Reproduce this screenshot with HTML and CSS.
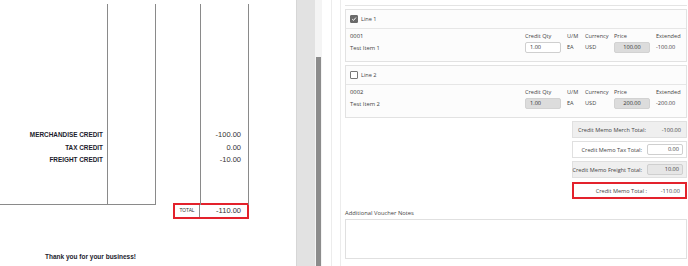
FILE: index.html
```html
<!DOCTYPE html>
<html lang="en">

<head>
     <meta charset="UTF-8">
     <meta name="viewport" content="width=device-width, initial-scale=1.0">
     <title>Credit memo | Review</title>
     <link rel="stylesheet" href="styles.css">
</head>

<body>

     <div id="wrapper">
          <!-- Printed credit memo preview -->
          <div class="doc">
               <div class="doc-table">
                    <div class="col col-desc">
                         <div class="label">MERCHANDISE CREDIT</div>
                         <div class="label">TAX CREDIT</div>
                         <div class="label">FREIGHT CREDIT</div>
                    </div>
                    <div class="col col-two"></div>
                    <div class="col col-three"></div>
                    <div class="col col-amount">
                         <div class="amount">-100.00</div>
                         <div class="amount">0.00</div>
                         <div class="amount">-10.00</div>
                    </div>
               </div>
               <div class="total-row">
                    <div class="total-label">TOTAL</div>
                    <div class="total-value">-110.00</div>
               </div>
               <p class="thanks">Thank you for your business!</p>
          </div>

          <div class="gutter"></div>
          <div class="scroll-track">
               <div class="scroll-thumb"></div>
          </div>

          <!-- Credit memo editor -->
          <div class="editor">
               <div class="frame-outer">
                    <div class="frame-inner">
                         <div class="prev-edge"></div>

                         <div class="line-card">
                              <div class="line-head">
                                   <span class="check checked">
                                        <svg viewBox="0 0 10 10" width="8" height="8">
                                             <path d="M2 5.2 L4.2 7.3 L8.2 2.6" fill="none" stroke="#fff" stroke-width="1.6" />
                                        </svg>
                                   </span>
                                   <span>Line 1</span>
                              </div>
                              <div class="line-body">
                                   <div class="item">
                                        <div class="item-code">0001</div>
                                        <div class="item-name">Test Item 1</div>
                                   </div>
                                   <div class="fields">
                                        <div class="field f-qty">
                                             <div class="f-label">Credit Qty</div>
                                             <div class="box">1.00</div>
                                        </div>
                                        <div class="field f-um">
                                             <div class="f-label">U/M</div>
                                             <div class="f-text">EA</div>
                                        </div>
                                        <div class="field f-cur">
                                             <div class="f-label">Currency</div>
                                             <div class="f-text">USD</div>
                                        </div>
                                        <div class="field f-price">
                                             <div class="f-label">Price</div>
                                             <div class="box box-off center">100.00</div>
                                        </div>
                                        <div class="field f-ext">
                                             <div class="f-label">Extended</div>
                                             <div class="f-text">-100.00</div>
                                        </div>
                                   </div>
                              </div>
                         </div>

                         <div class="line-card">
                              <div class="line-head">
                                   <span class="check"></span>
                                   <span>Line 2</span>
                              </div>
                              <div class="line-body">
                                   <div class="item">
                                        <div class="item-code">0002</div>
                                        <div class="item-name">Test Item 2</div>
                                   </div>
                                   <div class="fields">
                                        <div class="field f-qty">
                                             <div class="f-label">Credit Qty</div>
                                             <div class="box box-off">1.00</div>
                                        </div>
                                        <div class="field f-um">
                                             <div class="f-label">U/M</div>
                                             <div class="f-text">EA</div>
                                        </div>
                                        <div class="field f-cur">
                                             <div class="f-label">Currency</div>
                                             <div class="f-text">USD</div>
                                        </div>
                                        <div class="field f-price">
                                             <div class="f-label">Price</div>
                                             <div class="box box-off center">200.00</div>
                                        </div>
                                        <div class="field f-ext">
                                             <div class="f-label">Extended</div>
                                             <div class="f-text">-200.00</div>
                                        </div>
                                   </div>
                              </div>
                         </div>

                         <div class="totals">
                              <div class="total-line shaded">
                                   <span class="t-label left">Credit Memo Merch Total:</span>
                                   <span class="t-value">-100.00</span>
                              </div>
                              <div class="total-line">
                                   <span class="t-label">Credit Memo Tax Total:</span>
                                   <span class="t-input">0.00</span>
                              </div>
                              <div class="total-line shaded">
                                   <span class="t-label">Credit Memo Freight Total:</span>
                                   <span class="t-input t-input-off">10.00</span>
                              </div>
                              <div class="total-line grand">
                                   <span class="t-label">Credit Memo Total :</span>
                                   <span class="t-value">-110.00</span>
                              </div>
                         </div>

                         <div class="notes-label">Additional Voucher Notes</div>
                         <div class="notes"></div>
                    </div>
               </div>
          </div>
     </div>

</body>

</html>
```

FILE: styles.css
```css
* {
     padding: 0;
     margin: 0;
     box-sizing: border-box;
}

html,
body {
     width: 100%;
     height: 100%;
     overflow: hidden;
     background: #fff;
}

#wrapper {
     display: flex;
     width: 688px;
     height: 266px;
}

/* ---------- printed document ---------- */

.doc {
     width: 297px;
     height: 266px;
     border-right: 1px solid #d6d6d6;
     font-family: 'Liberation Sans', Arial, sans-serif;
     color: #1c1c2c;
}

.doc-table {
     display: flex;
     margin-top: 4px;
     height: 201px;
}

.col {
     border-right: 1px solid #8a8a8a;
}

.col-desc {
     width: 108px;
     border-bottom: 1px solid #8a8a8a;
     padding-top: 127px;
     padding-right: 4px;
     text-align: right;
}

.col-two {
     width: 48px;
     border-bottom: 1px solid #8a8a8a;
}

.col-three {
     width: 45px;
}

.col-amount {
     width: 48px;
     padding-top: 127px;
     padding-right: 7px;
     text-align: right;
}

.label {
     font-size: 6.4px;
     font-weight: 700;
     height: 12.6px;
     line-height: 8px;
     white-space: nowrap;
}

.amount {
     font-size: 7.5px;
     height: 12.6px;
     line-height: 8px;
     color: #333;
}

.total-row {
     display: flex;
     width: 76px;
     height: 16px;
     margin-left: 173px;
     margin-top: -2px;
     border: 2px solid #e3222c;
}

.total-label {
     width: 25px;
     border-right: 1px solid #8a8a8a;
     font-size: 4.8px;
     line-height: 12px;
     text-align: center;
     color: #333;
}

.total-value {
     flex: 1;
     font-size: 7.5px;
     line-height: 12px;
     text-align: right;
     padding-right: 6px;
     color: #333;
}

.thanks {
     margin-top: 34px;
     margin-left: 45px;
     font-size: 6.5px;
     font-weight: 700;
}

/* ---------- viewer gutter ---------- */

.gutter {
     width: 18px;
     background: #e2e2e2;
}

.scroll-track {
     width: 7px;
     background: #f4f4f4;
     padding-top: 57px;
     padding-left: 1px;
}

.scroll-thumb {
     width: 5px;
     height: 100%;
     background: #8c8c8c;
}

/* ---------- editor ---------- */

.editor {
     flex: 1;
     padding-left: 9px;
     font-family: 'Open Sans', 'Noto Sans', sans-serif;
     color: #444;
}

.frame-outer {
     height: 100%;
     border-left: 1px solid #ececec;
     padding-left: 8px;
}

.frame-inner {
     height: 100%;
     border-left: 1px solid #ececec;
     padding-left: 4px;
     padding-right: 1px;
}

.prev-edge {
     height: 6px;
     border-bottom: 1px solid #e4e4e4;
     margin-bottom: 3px;
}

.line-card {
     height: 53px;
     margin-bottom: 3px;
     border: 1px solid #e2e2e2;
     background: #fcfcfc;
}

.line-head {
     display: flex;
     align-items: center;
     gap: 3px;
     height: 19px;
     padding-left: 4px;
     border-bottom: 1px solid #e6e6e6;
     font-size: 5.6px;
}

.check {
     display: flex;
     align-items: center;
     justify-content: center;
     width: 8px;
     height: 8px;
     border: 1px solid #777;
     border-radius: 1px;
     background: #fff;
}

.check.checked {
     background: #6a6a6a;
     border-color: #6a6a6a;
}

.line-body {
     display: flex;
     padding-left: 4px;
     padding-top: 2px;
}

.item {
     flex: 1;
     font-size: 5.8px;
}

.item-code {
     height: 12px;
     line-height: 10px;
     color: #333;
}

.item-name {
     line-height: 10px;
}

.fields {
     display: flex;
     padding-top: 1px;
}

.field {
     font-size: 5.6px;
     white-space: nowrap;
}

.f-label {
     height: 8px;
     line-height: 8px;
     margin-bottom: 2px;
}

.f-text {
     line-height: 11px;
}

.f-qty {
     width: 42px;
}

.f-um {
     width: 18px;
}

.f-cur {
     width: 29px;
}

.f-price {
     width: 42px;
}

.f-ext {
     width: 30px;
}

.box {
     width: 36px;
     height: 11px;
     border: 1px solid #cfcfcf;
     border-radius: 2px;
     background: #fff;
     padding-left: 4px;
     line-height: 9px;
     color: #333;
}

.box-off {
     background: #dcdcdc;
     border-color: #d2d2d2;
}

.box.center {
     text-align: center;
     padding-left: 0;
}

.totals {
     display: flex;
     flex-direction: column;
     align-items: flex-end;
     gap: 3px;
     margin-top: 3px;
}

.total-line {
     display: flex;
     align-items: center;
     justify-content: flex-end;
     width: 115px;
     height: 17px;
     padding: 0 3px;
     border: 1px solid #e0e0e0;
     font-size: 5.6px;
     white-space: nowrap;
}

.total-line.shaded {
     background: #efefef;
}

.total-line.grand {
     border: 2px solid #e3222c;
     height: 17px;
     margin-top: 1px;
}

.t-label {
     flex: 1;
     text-align: right;
     padding-right: 5px;
}

.t-label.left {
     text-align: left;
     padding-left: 2px;
}

.t-value {
     width: 30px;
     text-align: right;
     padding-right: 2px;
}

.t-input {
     flex: none;
     width: 36px;
     height: 11px;
     line-height: 9px;
     text-align: right;
     padding-right: 3px;
     border: 1px solid #cfcfcf;
     border-radius: 2px;
     background: #fff;
}

.t-input-off {
     background: #e6e6e6;
}

.notes-label {
     margin-top: 10px;
     font-size: 5.8px;
     line-height: 8px;
}

.notes {
     height: 40px;
     margin-top: 2px;
     border: 1px solid #e0e0e0;
     background: #fff;
}
```
